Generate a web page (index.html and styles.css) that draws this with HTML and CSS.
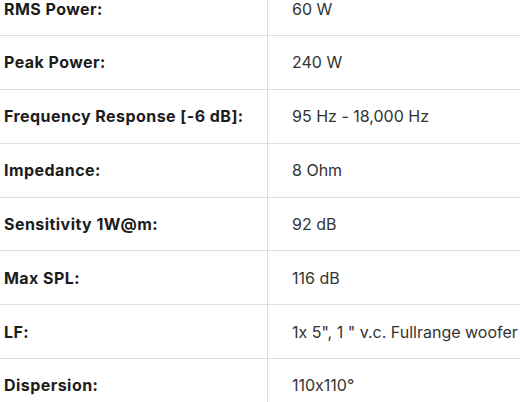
FILE: index.html
```html
<!DOCTYPE html>
<html>
<head>
<meta charset="utf-8">
<link rel="stylesheet" href="styles.css">
</head>
<body>
<div class="specs">
<table class="spec-table">
<tr><td class="label">RMS Power:</td><td class="value">60 W</td></tr>
<tr><td class="label">Peak Power:</td><td class="value">240 W</td></tr>
<tr><td class="label">Frequency Response [-6 dB]:</td><td class="value">95 Hz - 18,000 Hz</td></tr>
<tr><td class="label">Impedance:</td><td class="value">8 Ohm</td></tr>
<tr><td class="label">Sensitivity 1W@m:</td><td class="value">92 dB</td></tr>
<tr><td class="label">Max SPL:</td><td class="value">116 dB</td></tr>
<tr><td class="label">LF:</td><td class="value">1x 5", 1 " v.c. Fullrange woofer</td></tr>
<tr><td class="label">Dispersion:</td><td class="value">110x110°</td></tr>
</table>
</div>
</body>
</html>
```
FILE: styles.css
```css
html, body {
  margin: 0;
  padding: 0;
  background: #fff;
}
.specs {
  margin-top: -17.8px;
}
.spec-table {
  width: 520px;
  border-collapse: collapse;
  font-family: Inter, "Noto Sans", sans-serif;
  font-size: 16px;
  font-feature-settings: "calt" 0;
}
.spec-table td {
  height: 52.83px;
  padding: 0;
  vertical-align: middle;
  border-bottom: 1px solid #dddddd;
}
.label {
  width: 263px;
  padding-left: 4px !important;
  font-weight: 700;
  letter-spacing: 0.45px;
  color: #1c1c1c;
  border-right: 1px solid #dddddd;
}
.value {
  padding-left: 24px !important;
  font-weight: 400;
  color: #333;
  white-space: nowrap;
}
```
